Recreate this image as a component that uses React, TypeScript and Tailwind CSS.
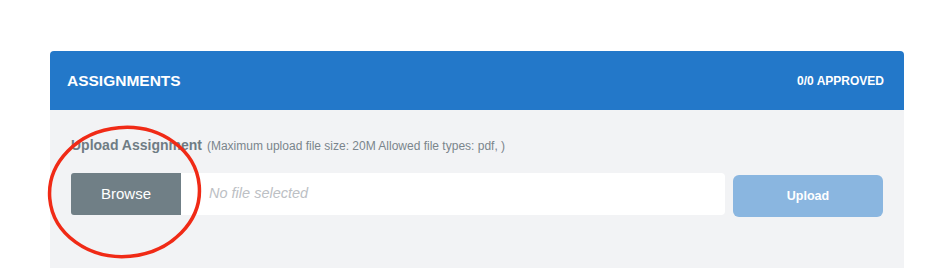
import React from "react";

function RedCircle() {
  return (
    <svg
      className="pointer-events-none absolute left-0 top-0"
      width={949}
      height={268}
      viewBox="0 0 949 268"
      fill="none"
    >
      <ellipse
        cx={124.5}
        cy={192}
        rx={75}
        ry={64.5}
        transform="rotate(-5 124.5 192)"
        stroke="#f02a16"
        strokeWidth={3.5}
      />
    </svg>
  );
}

export default function App() {
  return (
    <div className="relative h-[268px] w-[949px] overflow-hidden bg-white font-['Liberation_Sans',Arial,sans-serif]">
      <div className="ml-[50px] mt-[51px] w-[854px]">
        <div className="flex h-[59px] items-center justify-between rounded-t-[4px] bg-[#2378c9] pl-[17px] pr-[20px] text-white">
          <span className="text-[15.5px] font-bold">ASSIGNMENTS</span>
          <span className="text-[12px] font-bold">0/0 APPROVED</span>
        </div>
        <div className="bg-[#f2f3f5] pb-16 pl-[21px] pr-[21px] pt-[28px]">
          <div className="flex items-baseline gap-[5px] leading-none text-[#6f7c84]">
            <span className="text-[14px] font-bold">Upload Assignment</span>
            <span className="text-[12px] text-[#7a858c]">
              (Maximum upload file size: 20M Allowed file types: pdf, )
            </span>
          </div>
          <div className="mt-[21px] flex items-start">
            <button className="h-[42px] w-[110px] rounded-l-[3px] bg-[#707f86] text-[15px] text-white">
              Browse
            </button>
            <div className="flex h-[42px] w-[544px] items-center rounded-r-[4px] bg-white pl-[28px] text-[14.5px] italic text-[#bcc0c4]">
              No file selected
            </div>
            <button className="ml-[8px] mt-[2px] h-[42px] w-[150px] rounded-[6px] bg-[#8ab6e0] text-[12.5px] font-bold text-white">
              Upload
            </button>
          </div>
        </div>
      </div>
      <RedCircle />
    </div>
  );
}
